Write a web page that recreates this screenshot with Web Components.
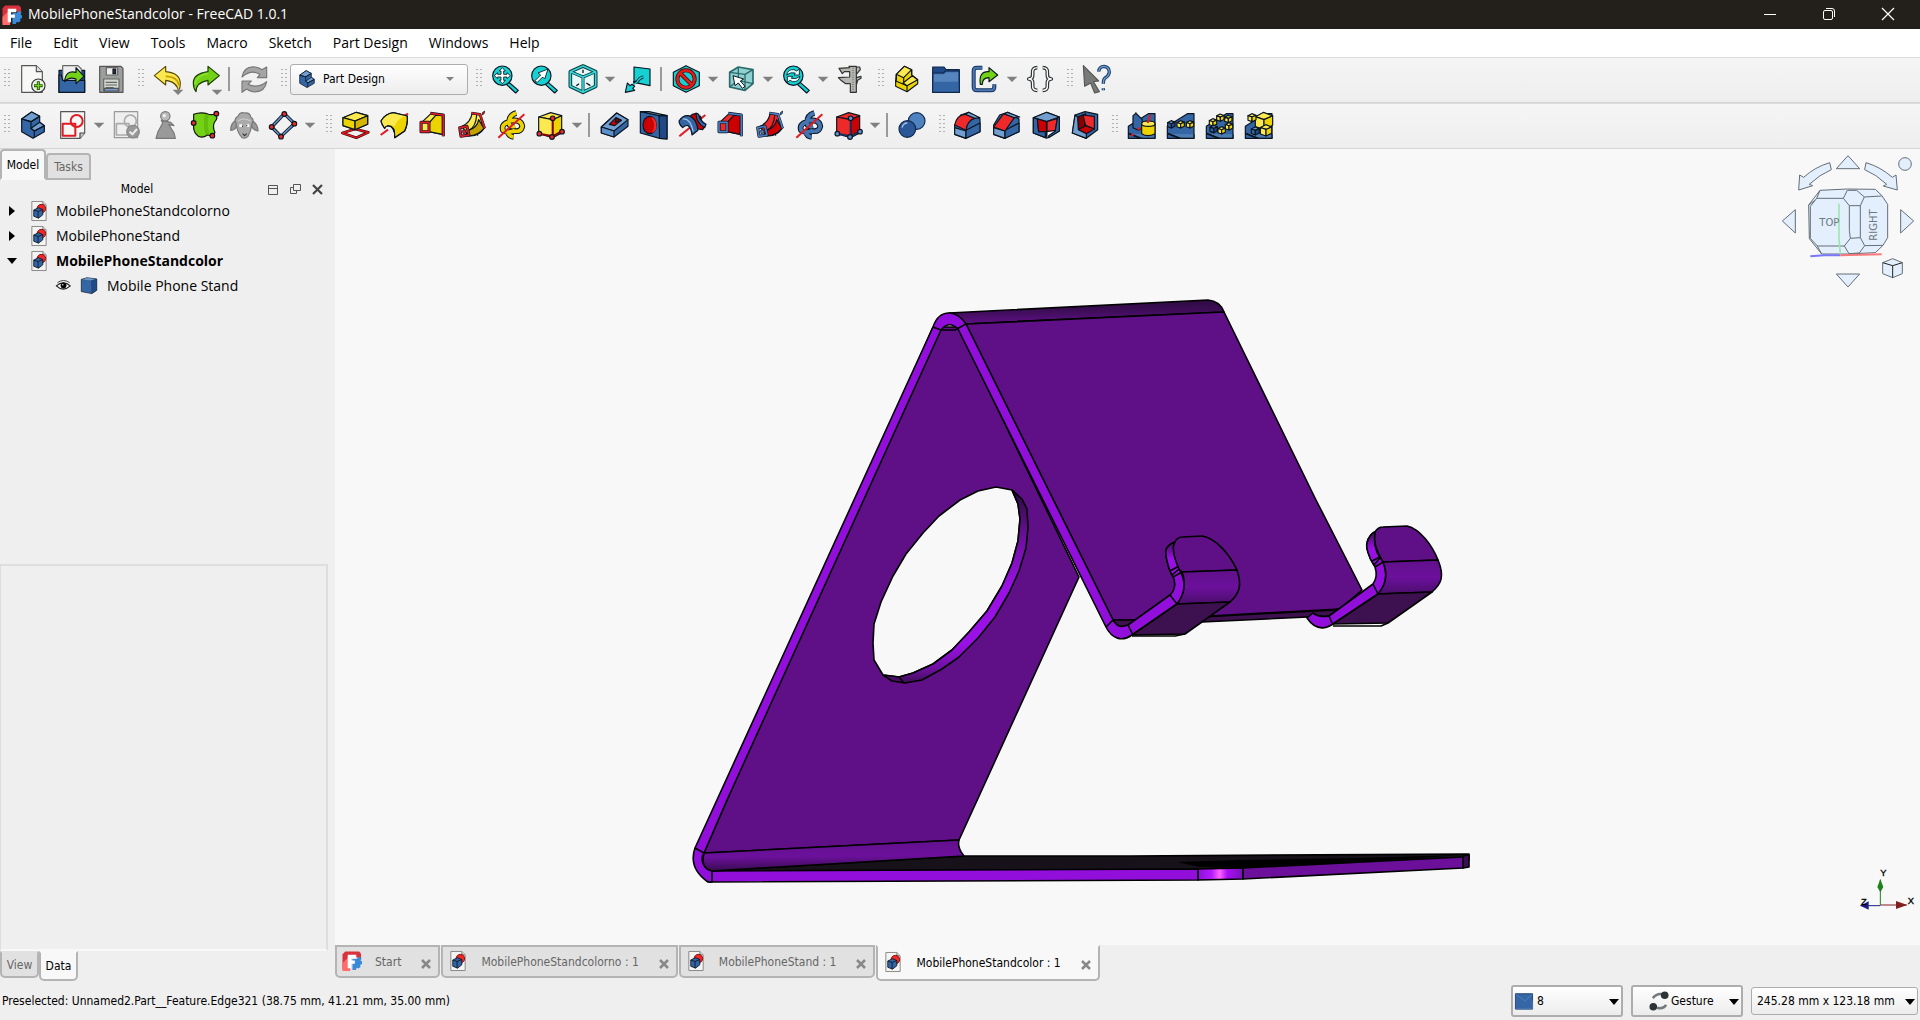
<!DOCTYPE html>
<html lang="en">
<head>
<meta charset="utf-8">
<title>MobilePhoneStandcolor - FreeCAD 1.0.1</title>
<style>
html,body{height:100%;margin:0}
body{font-family:"Open Sans","Noto Sans",sans-serif;font-size:14px;color:#000;background:#efefef;--small:"DejaVu Sans Condensed","DejaVu Sans",sans-serif}
</style>
</head>
<body>
<fc-app></fc-app>
<script>
const B='#3465a4',BL='#729fcf',BD='#204a87',Y='#fce94f',YM='#edd400',YD='#c4a000',R='#ef2929',RD='#cc0000',T='#16d0d2',TD='#06989a',G='#73d216',GD='#4e9a06';
const p=(d,f,s)=>`<path d="${d}" fill="${f||'none'}"${s?' '+s:''}/>`;
const c=(x,y,r,f,s)=>`<circle cx="${x}" cy="${y}" r="${r}" fill="${f}"${s?' '+s:''}/>`;
const box=(x,y,w,a,b,d)=>{const k=w*.22;return p(`M${x-w/2} ${y-w*.25}L${x-k*.1} ${y-w*.5}L${x+w/2} ${y-w*.3}L${x} ${y-w*.08}z`,a)+p(`M${x-w/2} ${y-w*.25}L${x} ${y-w*.08}V${y+w*.5}L${x-w/2} ${y+w*.32}z`,b)+p(`M${x+w/2} ${y-w*.3}L${x} ${y-w*.08}V${y+w*.5}L${x+w/2} ${y+w*.25}z`,d)};
const cube=(a,b,d)=>p('M8 18 44 5 77 14 50 26z',a)+p('M8 18 50 26V80L8 68z',b)+p('M77 14 50 26V80L77 66z',d);
const loft=(a,b,e)=>p('M8 34 36 8 70 12 70 70 30 62 8 62z',a)+p('M30 36 50 13 70 12 70 70 30 62z',b)+p('M34 7 73 12V76',null,'stroke-width="9"')+p('M34 7 73 12V76',null,`stroke="${e}" stroke-width="5"`)+p('M6 34H30V62H6z',null,'stroke-width="9"')+p('M6 34H30V62H6z',null,`stroke="${e}" stroke-width="5"`);
const pipe=(a,b,e)=>p('M12 46Q38 34 42 8L66 10Q70 38 80 50 62 78 30 74z',a)+p('M32 58Q54 48 56 12M60 74Q46 60 52 46',b==='none'?null:'none')+p('M32 58Q58 50 62 26L78 52Q58 76 30 74z',b)+p('M40 6 66 10 80 52',null,'stroke-width="8"')+p('M40 6 66 10 80 52',null,`stroke="${e}" stroke-width="5"`)+p('M5 50 27 46 33 72 9 76z',null,'stroke-width="9"')+p('M5 50 27 46 33 72 9 76z',null,`stroke="${e}" stroke-width="5"`)+p('M13 58l10-2 2 10-10 2z',e,'stroke-width="2"')+p('M80 0q-9 3-8 12 9-2 8-12z',e,'stroke-width="2"');
const hp='M58 6Q36 12 36 36 38 50 54 46M36 30Q72 22 76 46 72 64 52 60M36 32Q12 40 18 58 34 68 54 58M32 62Q36 76 50 78';
const helix=a=>p(hp,null,'stroke-width="17"')+p(hp,null,`stroke="${a}" stroke-width="11"`)+p('M4 80 82 10',null,'stroke="#e01b24" stroke-width="6"');
const lens=i=>p('M52 50 82 76 74 84 46 58z',T)+c(34,32,29,T)+i;
const pts=a=>c(50,22,7,a)+c(10,68,7,a)+c(48,78,7,a)+c(78,62,7,a);
const slope=p('M4 82V46L64 8H84V82z',B)+p('M4 68 40 82H84V70',BL,'fill-opacity=".4"')+p('M4 66 44 82');
const wedge=f=>p('M2 42V70L36 82 78 62V24L44 4 20 12z',B)+p('M2 50 36 60V82L2 70z',BL)+p('M36 58 78 36V62L36 82z',B)+f;
const ICONS={
new:p('M8 2H52L70 20V82H8z','#f8f8f7','stroke="#555"')+p('M52 2V20H70','#ddd','stroke="#555"')+c(58,62,20,'#eeeeec','stroke="#333"')+p('M58 49V75M45 62H71',null,'stroke="#1c5a00" stroke-width="9"')+p('M58 51V73M47 62H69',null,'stroke="#73d216" stroke-width="4"'),
open:p('M3 16H80V82H3z',BD)+p('M14 2H60L70 12V60H14z','#eee','stroke="#666"')+p('M3 30H10L14 46H80V82H3z',B)+p('M20 50Q22 14 54 22L54 8 78 34 54 56 54 42Q34 34 20 50z',G),
save:p('M8 4H72L78 10V82H8z','#9c9e9b','stroke="#555"')+p('M28 8H62V30H28z','#eee','stroke="#666"')+p('M48 12H56V26H48z','#333')+p('M20 42H66V78H20z','#d3d7cf','stroke="#666"')+p('M26 52H60M26 60H60M26 68H50',null,'stroke="#666"')+p('M22 70H64V78H22z','#729fcf','stroke="#555"'),
undo:p('M4 32 38 4V20Q80 24 82 54 82 70 76 80 74 50 38 46V60z',Y,'stroke="#5c4b00"')+p('M38 34Q74 34 78 62','none','stroke="#c4a000" stroke-width="5"'),
redo:p('M82 32 48 4V20Q4 26 4 54 4 70 12 80 12 52 48 46V60z',G,'stroke="#173d00"')+p('M48 26Q14 30 9 58','none','stroke="#8ae234" stroke-width="5"'),
refresh:p('M6 36Q12 2 46 6 58 8 66 14L80 6V38L52 38 60 28Q34 12 6 36zM80 50Q74 84 38 80 28 78 20 72L6 82V48H34L24 58Q52 72 80 50z','#a4a6a4','stroke="#777"'),
body:p('M38 3 62 16V34L76 44V62L42 82 8 62V24z',B)+p('M38 3 62 16 36 32 8 24z',BL)+p('M62 34 76 44 46 60 36 52z',BL)+p('M36 32V52L46 60V80M36 32 8 24M62 16 36 32M76 44 46 60'),
fit:lens(p('M34 8 43 18H38V28H48V23L58 32 48 41V36H38V46H43L34 56 25 46H30V36H20V41L10 32 20 23V28H30V18H25z','#fff','stroke-width="2.5"')),
fitsel:lens(p('M14 48 32 30 24 24 54 12 44 42 38 36 22 52z','#fff','stroke-width="2.5"')),
sync:lens(p('M14 30Q18 12 36 14L44 18 52 12V30H36L40 24Q26 20 14 30zM54 34Q50 52 32 50L24 46 16 52V34H32L28 40Q42 44 54 34z','#e8ffff','stroke-width="2.5"')),
iso:p('M42 3 80 20V64L42 82 4 64V20z','#e8f8f8','stroke-width="11" stroke="#0c3a3c"')+p('M4 20 42 36 80 20M42 36V82',null,'stroke-width="9" stroke="#0c3a3c"')+p('M42 3 80 20V64L42 82 4 64V20zM4 20 42 36 80 20M42 36V82',null,'stroke="#34d5d8" stroke-width="5"')+p('M22 62 30 56M52 54 64 62M42 14V24',null,'stroke-width="4"'),
nav:p('M30 6 78 12V62L30 52z',T)+p('M58 36Q46 38 40 50L28 54',null,'stroke-width="9"')+p('M58 36Q46 38 40 50L22 64',null,'stroke="#16d0d2" stroke-width="4"')+p('M4 82 10 54 18 62 24 58 32 64 26 70 32 76z',T),
draw:p('M42 2 82 22V62L42 82 4 62V22z',T)+c(42,42,26,'none','stroke="#4a0000" stroke-width="12"')+p('M24 24 60 60',null,'stroke="#4a0000" stroke-width="12"')+c(42,42,26,'none','stroke="#dd1c1c" stroke-width="8"')+p('M24 24 60 60',null,'stroke="#dd1c1c" stroke-width="8"'),
boxsel:p('M8 22 34 6 78 14V56L54 76 8 66z','#8fd0d0','stroke="#2c6a6a" stroke-width="5"')+p('M8 22 54 28 78 14M54 28V76M34 6V46L8 66M34 46 78 56',null,'stroke="#2c6a6a" stroke-width="4"')+p('M18 32 50 42 40 48 54 64 46 70 34 54 24 62z','#fff','stroke-width="3"'),
caliper:p('M36 4H58V82H40V56L26 56 12 46 4 38 38 36V20L22 20 16 26 6 10 38 8zM58 6H68L70 14 58 28zM58 38 72 34V40L62 46 58 60z','#b5b8b1','stroke="#333"')+p('M48 8V80',null,'stroke="#666" stroke-dasharray="3 4"'),
part:p('M10 28 34 4 56 14V30L74 44V56L42 80 8 64V48z',YM)+p('M10 28 34 4 56 14 32 38zM42 62 74 44 58 32 30 54z',Y)+p('M10 28V46L8 48 42 62V80M32 38V54M56 14V30',null),
folder:p('M2 6H36L42 14H82V82H2z',BD,'stroke="#10284c"')+p('M2 24H34L40 18H82V82H2z',B,'stroke="#10284c"')+p('M6 28H36L42 22H78V50H6z',BL,'stroke="none" fill-opacity=".55"'),
link:p('M34 8H18Q8 8 8 18V66Q8 76 18 76H60Q70 76 70 66V58',null,'stroke="#16305c" stroke-width="12"')+p('M34 8H18Q8 8 8 18V66Q8 76 18 76H60Q70 76 70 66V58',null,'stroke="#4a78b4" stroke-width="6"')+p('M28 58Q22 18 54 20V8L80 30 54 50V38Q34 38 34 58z',G),
braces:[11,4].map((w,i)=>p('M34 8Q18 8 20 24V30Q20 42 8 42 20 42 20 54V60Q18 76 34 76M50 8Q66 8 64 24V30Q64 42 76 42 64 42 64 54V60Q66 76 50 76',null,`stroke="${i?'#fff':'#2e3436'}" stroke-width="${w}"`)).join(''),
whats:p('M4 2 50 48 34 50 52 80 38 84 26 54 8 64z','#777a77','stroke="#555"')+p('M50 20Q52 4 66 4 82 6 82 22 80 34 68 40 64 44 64 56M64 70V76',null,'stroke="#173a68" stroke-width="10"')+p('M50 20Q52 4 66 4 82 6 82 22 80 34 68 40 64 44 64 56M64 70V76',null,'stroke="#729fcf" stroke-width="4"'),
sketch:p('M8 2H80V66L66 82H8z','#f6f6f5','stroke="#555"')+p('M80 66H66V82','#ccc','stroke="#444"')+c(56,30,18,'none','stroke="#e01b24" stroke-width="6"')+p('M14 38H52V74H14z',null,'stroke="#e01b24" stroke-width="6"'),
valid:p('M4 2H74V80H4z','#eee','stroke="#999"')+c(52,30,18,'none','stroke="#aaa" stroke-width="5"')+p('M10 38H48V72H10z',null,'stroke="#aaa" stroke-width="5"')+c(60,62,19,'#999','stroke="#888"')+p('M50 62 58 70 72 54',null,'stroke="#eee" stroke-width="6"'),
chess:p('M28 28 56 34 66 44 50 40 66 66 70 82H12L18 62 32 36z','#9a9a9a','stroke="#777"')+c(40,16,14,'#bbb','stroke="#777"')+c(37,14,5,'#eee','stroke="none"'),
green:p('M8 10Q28 2 48 8 62 14 72 8 84 20 70 34 64 50 72 64 66 78 50 72 28 86 16 70 6 60 8 40z','#73d216','stroke="#111"')+p('M48 8Q40 40 50 72',null,'stroke="#4e9a06" stroke-width="12" stroke-opacity=".4"')+c(76,8,7,R)+c(8,36,7,R)+c(64,74,7,R),
sheep:p('M18 28Q2 36 2 58 16 58 22 42M64 28Q84 38 84 60 70 58 62 42','#999','stroke="#777"')+p('M18 36Q10 24 24 16 30 2 44 6 60 4 62 18 74 26 66 38 64 58 54 76 46 84 36 80 22 66 18 36z','#aaa','stroke="#777"')+p('M28 44h8M50 44h8',null,'stroke="#fff" stroke-width="8"')+p('M36 46h3M49 44h3M38 68 44 74 50 68',null,'stroke="#333"')+p('M24 30Q40 18 62 30',null,'stroke="#ccc"'),
poly:p('M46 8 76 38 36 76 8 48z',null,'stroke="#111" stroke-width="10"')+p('M46 8 76 38 36 76 8 48z',null,'stroke="#5c8fcc" stroke-width="5"')+c(46,9,7,R)+c(76,38,7,R)+c(36,77,7,R)+c(8,48,7,R),
pad:p('M4 66 42 54 82 64 46 80z','none','stroke="#4a0000" stroke-width="8"')+p('M4 66 42 54 82 64 46 80z','none','stroke="#e01b24" stroke-width="4"')+p('M6 20 46 4 80 14V40L42 56 6 44z',YM)+p('M6 20 46 4 80 14 42 30z',Y)+p('M6 20 42 30V56L6 44z',YM)+p('M42 30 80 14V40L42 56z',YD,'fill-opacity=".6"'),
revol:p('M2 72 24 56M66 18 84 8',null,'stroke="#e01b24" stroke-width="6"')+p('M3 30Q16 8 40 5L82 15Q84 40 74 60L44 80Q46 46 24 44 16 46 14 52 6 42 3 30z',YM)+p('M3 30Q16 8 40 5L82 15Q54 18 44 46 34 40 24 44 16 46 14 52 6 42 3 30z',Y,'stroke="none"')+p('M3 30Q16 8 40 5L82 15Q84 40 74 60L44 80Q46 46 24 44 16 46 14 52 6 42 3 30z'),
loft:loft(Y,YM,'#e01b24'),pipe:pipe(Y,YD,'#e01b24'),helix:helix(YM),
acube:cube(Y,Y,YM)+p('M50 24V76L10 68M50 76 78 60',null,'stroke="#8a0000" stroke-width="6"')+pts(R),
pocket:p('M4 48 50 6 84 26V46L42 78 4 66z',B)+p('M4 48 50 6 84 26 42 60z',BL)+p('M42 60V78L4 66V48z','#5c8fcc')+p('M28 40 48 20 64 28 44 44z',RD)+p('M48 20 46 34 64 28z','#800'),
hole:p('M4 2 70 12 84 14V84L62 82 4 66z',B)+p('M60 14 84 14V84L62 82z',BD)+p('M4 2 60 14 84 14 30 2z',BL)+`<ellipse cx="32" cy="42" rx="20" ry="26" fill="${RD}"/>`+p('M36 18Q54 42 38 66 56 60 52 36 48 20 36 18z',R,'stroke="none"'),
groove:p('M4 76 82 12',null,'stroke="#e01b24" stroke-width="6"')+p('M36 16Q44 6 56 8L60 14 68 16 72 40 80 46 74 56 60 54 54 44 36 26z',RD)+p('M3 30Q14 12 32 14 56 22 60 58L42 72Q40 52 30 44 22 42 14 50 4 42 3 30z',B)+p('M14 24Q36 20 46 62',null,'stroke="#a4c6ec"')+p('M54 6Q54 36 80 50L84 40Q64 28 62 10z',B),
sloft:loft(R,RD,'#4a7cc0'),spipe:pipe(R,RD,'#4a7cc0'),shelix:helix('#4576b4'),
scube:cube(R,R,RD)+p('M50 24V76L10 68M50 76 78 60',null,'stroke="#16305c" stroke-width="6"')+pts('#5c8fcc'),
bool:c(56,30,25,'#4f82c0','stroke="#10284c"')+c(28,54,25,'#2b5797','stroke="#10284c"')+p('M12 50Q16 36 28 36',null,'stroke="#9fc2e8" stroke-width="4"'),
fillet:wedge(p('M2 42Q8 12 34 10L62 22Q40 28 36 58z',R)+p('M44 4 78 20 62 22 34 10z',BL)),
chamfer:wedge(p('M2 48 32 8 64 20 36 60z',R)+p('M44 4 80 18 64 20 34 8z',BL)),
draft:p('M4 20 44 4 82 18V60L44 82 4 66z','#fff')+p('M4 20 44 4 82 18 44 32z',BL)+p('M4 20 16 24 20 62 40 58V80L4 66z',B)+p('M16 24 44 32V62L20 62z',RD)+p('M44 32 76 22 70 58 44 62z',R)+p('M76 22 82 18V60L50 80V74L70 60z',B)+p('M44 30V80',null,'stroke-width="5"'),
thick:p('M12 12 42 2 80 10V56L46 82 4 66z',B)+p('M20 18 44 8 40 50 22 56z','#8a0000')+p('M36 12 70 16V54L44 44z',R)+p('M22 56 44 44 70 54 46 68z',RD)+p('M12 12 20 18 22 56 46 68V82L4 66z',BL),
mirror:slope+p('M18 14Q30 4 26 6L46 26V50L34 58 18 50z',B)+p('M44 38Q62 22 84 38V68Q62 80 44 68z',YM)+`<ellipse cx="64" cy="38" rx="20" ry="8" fill="${Y}"/>`+p('M62 36 70 12M12 74l8-4M32 56l8-6',null,'stroke="#e01b24" stroke-width="6"'),
linear:slope+box(16,40,22,BL,B,BD)+box(44,40,22,Y,Y,YM)+box(72,40,22,Y,Y,YM),
polar:slope+box(46,20,22,Y,Y,YM)+box(70,24,22,Y,Y,YM)+box(24,34,22,Y,Y,YM)+box(72,46,22,Y,Y,YM)+box(26,54,22,BL,B,BD)+box(50,58,22,Y,Y,YM),
multi:slope+box(60,30,52,Y,Y,YM)+box(24,20,24,Y,Y,YM)+box(34,60,24,BL,B,BD)+box(66,58,34,Y,Y,YM),
doc:p('M12 2H58L72 16V82H12z','#f4f4f2','stroke="#777"')+p('M58 2V16H72','#ccc','stroke="#777"')+c(52,32,18,R,'stroke="#700"')+p('M20 38 40 28 58 36V58L40 72 20 64z',B)+p('M20 38 38 44 58 36M38 44V72'),
solid:p('M4 12 32 4 80 10V66L56 82 4 72z',B)+p('M4 12 32 4 80 10 54 18z',BL,'stroke-width="1"')+p('M54 18 80 10V66L56 82z',BD,'stroke-width="1"'),
eye:p('M2 44Q40 10 80 44 40 80 2 44z','#fff','stroke="#222" stroke-width="7"')+c(42,42,15,'#000')+c(38,38,4,'#fff','stroke="none"')+p('M8 26Q42 2 76 26',null,'stroke="#333" stroke-width="5"'),
freecad:p('M14 2H72L80 12V34L70 28 56 26H34V80L10 84 2 76V14z','#d8323e','stroke="none"')+p('M2 50 34 20V84H2z','#ff6b6b','stroke="none"')+p('M44 34H62L66 28 74 24 82 32 78 40 84 44V56L76 58 78 66 70 74 62 70 58 80H44z','#3b8ad8','stroke="none"')+p('M24 16H60V30H38V40H54V54H38V72H24z','#fff','stroke="none"'),
gesture:p('M16 30Q34 8 56 14',null,'stroke="#777a7c" stroke-width="11"')+p('M72 58Q60 78 34 70',null,'stroke="#777a7c" stroke-width="11"')+c(66,18,16,'#2e3436','stroke="none"')+c(18,66,16,'#2e3436','stroke="none"'),
layer:p('M2 8H82V80H2z','#3566a5','stroke="#1d3a63" stroke-width="4"')+p('M4 12 46 42 80 12M80 40 82 78 4 78',null,'stroke="#5b8cc9" stroke-width="3"')
};
const def=(n,css,html)=>customElements.define(n,class extends HTMLElement{
 constructor(){super();const r=this.attachShadow({mode:'open'});const t=document.createElement('template');
 t.innerHTML=`<style>*{box-sizing:border-box}button,select{font:inherit;color:inherit;margin:0}${css}</style>`+(typeof html==='function'?html(this):html);r.append(t.content.cloneNode(true))}
});
def('fc-icon',':host{display:block;flex:none;width:28px;height:28px}svg{display:block;width:100%;height:100%;overflow:visible}',
 h=>`<svg viewBox="0 0 84 84" aria-hidden="true"><g stroke="#0b1521" stroke-width="3.5" stroke-linejoin="round">${ICONS[h.getAttribute('name')]}</g></svg>`);
def('fc-tool',`:host{display:flex;position:relative;flex:none}
 button{border:0;background:none;padding:0;display:flex;align-items:center;justify-content:center;height:32px}
 .i{width:39px}.a{width:16px}.a svg{display:block}
 .u{position:absolute;right:0;bottom:-1px;height:8px;width:16px}`,
 h=>{const m=h.getAttribute('menu'),n=h.getAttribute('label');return `<button class="i" aria-label="${n}"><fc-icon name="${h.getAttribute('icon')}"></fc-icon></button>`+(m!==null?`<button class="a${m==='under'?' u':''}" aria-label="${n} options"><svg width="12" height="7"><path d="M1 1H11" stroke="#bbb"/><path d="M1 1H11L6 6z" fill="#808080"/></svg></button>`:'')});
def('fc-grip',`:host{display:block;flex:none;width:17px;padding:0 3px 0 8px}i{display:block;height:20px;background:repeating-linear-gradient(#b0b0b0 0 1px,transparent 1px 4px);-webkit-mask:linear-gradient(90deg,#000 2px,transparent 2px 4px,#000 4px)}`,'<i></i>');
def('fc-sep',':host{display:block;flex:none;width:9px;padding:0 4px 0 3px}i{display:block;height:24px;background:#9a9a9a}','<i></i>');
def('fc-combo',`:host{display:flex;align-items:center;position:relative;border:1px solid #adadad;border-radius:3px;background:linear-gradient(#fff,#ececec);font:12px/16px var(--small)}
 select{appearance:none;border:0;background:none;outline:0;padding:0 18px 0 var(--in,8px);width:100%;height:100%}
 fc-icon{position:absolute;left:var(--ix,8px);width:var(--is,18px);height:var(--is,18px);pointer-events:none}
 svg{position:absolute;right:var(--ar,4px);top:calc(50% - 2px);pointer-events:none}`,
 h=>`${h.hasAttribute('icon')?`<fc-icon name="${h.getAttribute('icon')}"></fc-icon>`:''}<select aria-label="${h.getAttribute('label')}"><option>${h.getAttribute('value')}</option></select><svg width="10" height="6"><path d="${h.hasAttribute('arrow')?'M1 0H9L5 4z':'M0 0H10L5 6z'}" fill="${h.getAttribute('arrow')||'#000'}"/></svg>`);
def('fc-titlebar',`:host{display:flex;align-items:center;height:29px;background:#23201c;color:#fff;padding:0 3px 0 2px}
 span{margin-left:6px;flex:1;line-height:20px;padding-bottom:2px}fc-icon{width:20px;height:20px}
 button{border:0;background:none;padding:0 0 2px;width:59px;height:29px;display:grid;place-items:center}svg{display:block}`,
 `<fc-icon name="freecad"></fc-icon><span><slot></slot></span>
 <button aria-label="Minimize"><svg width="14" height="14"><path d="M1 7.5H13" stroke="#fff"/></svg></button>
 <button aria-label="Restore"><svg width="14" height="14" fill="none" stroke="#fff"><rect x="1.5" y="3.5" width="9" height="9" rx="1.5"/><path d="M4 1.5H10Q12.5 1.5 12.5 4V10"/></svg></button>
 <button aria-label="Close"><svg width="14" height="14"><path d="M1 1 13 13M13 1 1 13" stroke="#fff" stroke-width="1.2"/></svg></button>`);
def('fc-menubar',`:host{display:block;background:#fff}nav{display:flex;align-items:center;height:28px}button{border:0;background:none;padding:0 11px 0 10px;height:28px;line-height:20px}`,
 '<nav>'+['File','Edit','View','Tools','Macro','Sketch','Part Design','Windows','Help'].map(t=>`<button>${t}</button>`).join('')+'</nav>');
def('fc-toolbar',`:host{display:flex;align-items:center;height:46px;padding-bottom:2px;border-top:1px solid #dcdcdc;border-bottom:1px solid #d4d4d4;background:linear-gradient(#f5f5f5,#eee)}::slotted(:first-child){margin-left:-4px}`,'<slot></slot>');
def('fc-tab',`:host{display:block;flex:none;font:12px/16px var(--small)}
 button{display:flex;align-items:center;height:100%;width:100%;border:2px solid #b4b4b4;background:#e1e1e1;color:#666;padding:0 5px;white-space:nowrap;justify-content:center}
 :host([edge=top]) button{border-radius:4px 4px 0 0}
 :host([edge=bottom]) button{border-radius:0 0 5px 5px}
 :host([on]) button{background:#f8f8f8;color:#000}
 :host([on][edge=top]) button{border-bottom-color:#f8f8f8}
 :host([on][edge=bottom]) button{border-top-color:#f8f8f8}
 :host([edge=bottom]:not([icon])) button{border-top-color:transparent}
 fc-icon{width:20px;height:20px;margin:0 13px 2px 0}svg{margin:4px 2px 0 20px}`,
 h=>`<button role="tab">${h.hasAttribute('icon')?`<fc-icon name="${h.getAttribute('icon')}"></fc-icon>`:''}<slot></slot>${h.hasAttribute('icon')?'<svg width="10" height="10"><path d="M1 1 9 9M9 1 1 9" stroke="#888" stroke-width="2.5"/></svg>':''}</button>`);
def('fc-tree-row',`:host{display:flex;align-items:center;height:25px;line-height:20px}
 button{border:0;background:none;width:24px;height:20px;padding:0;display:grid;place-items:center;margin-right:5px}
 .d{width:20px;height:20px;margin-right:7px}.e{width:15px;height:15px;margin:0 8px 0 56px}.s{width:20px;height:17px;margin-right:8px}:host([open]){font-weight:700}`,
 h=>h.hasAttribute('child')?'<fc-icon class="e" name="eye"></fc-icon><fc-icon class="s" name="solid"></fc-icon><slot></slot>':
 `<button aria-label="Toggle"><svg width="12" height="12">${h.hasAttribute('open')?'<path d="M1 3H11L6 9z"/>':'<path d="M3 1V11L9 6z"/>'}</svg></button><fc-icon class="d" name="doc"></fc-icon><slot></slot>`);
def('fc-dock',`:host{display:flex;flex-direction:column;width:328px;flex:none}
 .t{display:flex;align-items:flex-end;height:31px}.t fc-tab{height:27px;width:45px}.t fc-tab[on]{height:31px;width:46px}
 header{display:flex;align-items:center;height:18px;font:12px/16px var(--small);padding-left:12px}header span{flex:1;text-align:center}
 header button{border:0;background:none;padding:0;width:22px;height:18px;display:grid;place-items:center}
 .tree{flex:22 1 0}.prop{flex:23 1 0;border:2px solid #dedede;border-left-width:1px;border-bottom-color:#f8f8f8}
 .b{display:flex;height:30px;align-items:flex-start}.b fc-tab{height:27px;width:39px}.b fc-tab[on]{height:30px}`,
 `<div class="t"><fc-tab edge="top" on>Model</fc-tab><fc-tab edge="top">Tasks</fc-tab></div>
 <header><span>Model</span><button aria-label="Overlay"><svg width="11" height="11" fill="none" stroke="#555"><path d="M.5 1.5h9v9h-9zM.5 4.5h9"/></svg></button><button aria-label="Float"><svg width="11" height="11" fill="none" stroke="#555"><path d="M3.5 .5h7v6h-7zM3 3.5H.5v6h6V7"/></svg></button><button aria-label="Close"><svg width="11" height="11"><path d="M1 1 10 10M10 1 1 10" stroke="#444" stroke-width="2.2"/></svg></button></header>
 <div class="tree"><fc-tree-row>MobilePhoneStandcolorno</fc-tree-row><fc-tree-row>MobilePhoneStand</fc-tree-row><fc-tree-row open>MobilePhoneStandcolor</fc-tree-row><fc-tree-row child>Mobile Phone Stand</fc-tree-row></div>
 <div class="prop"></div><div class="b"><fc-tab edge="bottom">View</fc-tab><fc-tab edge="bottom" on>Data</fc-tab></div>`);
const P='#5f1087',L='#920fdb',D='#3d1150';
def('fc-model',':host{display:block;width:100%;height:100%}svg{display:block;width:100%;height:100%}',
`<svg viewBox="335 149 1585 796" role="img" aria-label="Phone stand model"><defs>
<linearGradient id="roll" x1="0" y1="0" x2=".06" y2="1"><stop offset="0" stop-color="#2a0a3c"/><stop offset=".45" stop-color="#3c0d55"/><stop offset="1" stop-color="${P}"/></linearGradient>
<linearGradient id="fold" x1="0" y1="0" x2=".06" y2="1"><stop offset="0" stop-color="#61108a"/><stop offset=".55" stop-color="#6c109c"/><stop offset="1" stop-color="#380c50"/></linearGradient>
<linearGradient id="hook" x1="0" y1="0" x2="0" y2="1"><stop offset="0" stop-color="#60108a"/><stop offset=".5" stop-color="#6c109c"/><stop offset="1" stop-color="#4c0e6c"/></linearGradient>
<linearGradient id="rim" x1="0" y1="0" x2="0" y2="1"><stop offset="0" stop-color="#2a0a3c"/><stop offset=".25" stop-color="#6c109c"/><stop offset=".5" stop-color="#9a11e6"/><stop offset=".8" stop-color="#9a11e6"/><stop offset=".93" stop-color="#6c109c"/><stop offset="1" stop-color="#3c0d55"/></linearGradient>
<linearGradient id="lip" x1="0" y1="0" x2="0" y2="1"><stop offset="0" stop-color="#3c0d55"/><stop offset=".5" stop-color="#9a11e6"/><stop offset="1" stop-color="#920fdb"/></linearGradient>
<linearGradient id="shine"><stop offset="0" stop-color="#8f10d6"/><stop offset=".3" stop-color="#b31bff"/><stop offset=".48" stop-color="#ff63ff"/><stop offset=".65" stop-color="#a810f4"/><stop offset="1" stop-color="#7a10b4"/></linearGradient></defs>
<g stroke="#000" stroke-width="1.6" stroke-linejoin="round">
<path fill="#17111a" d="M708 871 964 856 1130 856 1469 854V860L1243 868 1198 870z"/>
<path fill="#000" d="M1177 862 1240 860 1360 858 1463 855 1360 862 1243 868 1200 867z" stroke="none"/>
<path fill="${L}" d="M709 871 1198 869V880L709 882z"/><path fill="url(#shine)" d="M1198 869 1243 868V879L1198 880z"/>
<path fill="#6c109c" d="M1243 868 1463 857V868L1243 879z"/><path fill="#3c0d55" d="M1463 856 1469 855V867L1463 868z"/>
<path fill-rule="evenodd" fill="${P}" d="M933 327 704 853 959 840 1079 577 958 327zM1012 490 996 487 978 491 960 500 939 516 923 533 906 554 893 576 881 602 874 624 873 643 874 660 883 675 899 677 913 673 933 664 952 650 969 632 987 611 1002 586 1012 563 1018 541 1020 519 1018 504z"/>
<path fill="url(#rim)" d="M1012 490 1022 499 1027 509 1028 528 1026 548 1019 571 1009 593 995 617 978 638 959 657 942 669 922 680 905 683 892 681 883 675 899 677 913 673 933 664 952 650 969 632 987 611 1002 586 1012 563 1018 541 1020 519 1018 504z"/>
<path fill="none" d="M899 677 904 683"/>
<path fill="url(#fold)" d="M704 853 959 840Q957 848 964 856L712 871Q700 868 704 853z"/>
<path fill="url(#roll)" d="M949 313 1208 300Q1220 301 1224 312L966 324z"/>
<path fill="${P}" d="M966 324 1224 312 1316 500 1362 590 1340 609 1210 616 1134 620H1113z"/>
<path fill="${D}" d="M1202 617 1335 610 1346 606 1329 616 1308 617 1202 622z"/>
<path fill="${D}" d="M1113 620H1136L1128 627H1117z"/>
<path fill="${L}" d="M933 327C936 318 942 313 949 313 957 313 962 318 966 324L1113 620C1118 628 1122 627 1128 625L1170 595C1177 588 1175 579 1172 575 1168 568 1165 554 1166 550 1168 544 1173 543 1175 542 1172 553 1177 563 1179 569 1183 576 1185 584 1184 590 1184 595 1180 601 1177 604L1132 635C1122 642 1112 639 1106 627L958 329Q949 320 941 330L727 800 704 853C699 861 705 870 712 871V882L708 882Q688 868 695 848z"/>
<path fill="url(#lip)" d="M1172 575C1168 568 1165 554 1166 550 1168 544 1173 543 1175 542 1172 553 1177 563 1179 569z"/>
<path fill="none" d="M933 327 941 330H955L966 324M1106 627 1113 620M1128 625 1133 635M1170 595 1177 604M1170 571 1179 566M1173 577 1182 572M695 848 704 853"/>
<path fill="${P}" d="M1175 542Q1177 537 1183 537L1202 536C1216 538 1230 555 1237 570L1182 572 1179 569C1172 553 1173 545 1175 542z"/>
<path fill="url(#hook)" d="M1182 572 1237 570C1242 585 1240 593 1230 602L1177 604C1186 592 1185 580 1182 572z"/>
<path fill="${D}" d="M1177 604 1230 602 1185 634 1132 635z"/><path fill="none" d="M1132 636 1175 636 1185 634"/>
<path fill="${L}" d="M1307 618 1313 613Q1320 618 1329 616L1373 584C1378 577 1376 570 1375 567 1368 557 1366 546 1367 543 1368 537 1373 532 1375 532 1374 547 1378 553 1383 562 1387 572 1387 584 1378 594L1333 624Q1318 634 1307 618z"/>
<path fill="url(#lip)" d="M1374 565C1368 557 1366 546 1367 543 1368 537 1373 532 1375 532 1374 547 1376 551 1380 558z"/>
<path fill="none" d="M1329 616 1333 625M1373 584 1378 594M1372 561 1380 557M1375 567 1383 562"/>
<path fill="${P}" d="M1375 532Q1378 527 1383 527L1407 526C1420 529 1432 545 1438 560L1383 562C1374 546 1374 541 1375 532z"/>
<path fill="url(#hook)" d="M1383 562 1438 560C1445 577 1441 584 1432 592L1378 594C1388 582 1387 572 1383 562z"/>
<path fill="${D}" d="M1378 594 1432 592 1388 623 1333 624z"/><path fill="none" d="M1333 626 1381 626 1388 623"/>
</g></svg>`);
def('fc-navcube',':host{display:block;width:137px;height:138px}svg{display:block;width:100%;height:100%}text{font:30px "DejaVu Sans",sans-serif;stroke:none;fill:#6c7882}',
`<svg viewBox="240 455 411 414" role="img" aria-label="Navigation cube"><g fill="#e3effc" stroke="#646e78" stroke-width="3" stroke-linejoin="round">
<path d="M444 466 479 505H409zM444 860 479 821H409zM247 662 286 628V698zM641 662 602 628V698z"/>
<path d="M389 487 394 508Q360 522 328 552L338 556 296 569 299 524 311 531Q345 500 389 487zM498 487 494 508Q528 522 560 552L550 557 592 569 588 524 577 531Q542 500 498 487z"/>
<circle cx="615" cy="491" r="19"/>
<path d="M360 570 442 566 526 567 545 585 563 612V712L549 735 526 757 443 761 365 761 328 715 326 614z"/>
<path fill="none" d="M360 570 350 594 331 618V714L352 737 365 761M350 594 430 594 448 616V690L451 714 433 737H352M430 594 442 570H470L493 590 481 616 448 616M481 616V712L494 736 549 735M493 590 545 587M451 714 481 712M433 737 447 760 478 758 494 736M326 614 345 600"/>
<path d="M578 775 607 787V820L578 832 548 820V787z"/><path fill="none" stroke="#222" d="M548 787 578 796 607 787M578 796V832"/></g>
<path d="M417 610V715L421 762" fill="none" stroke="#9ae8ae" stroke-width="5"/><path d="M331 768 372 765H421" fill="none" stroke="#7878fa" stroke-width="6"/><path d="M421 765 545 762" stroke="#fa7878" stroke-width="6"/>
<text x="358" y="677">TOP</text><text font-size="30" transform="translate(531 721) rotate(-90)">RIGHT</text></svg>`);
def('fc-axes',':host{display:block;width:62px;height:45px}svg{display:block;width:100%;height:100%}text{font:28px "Liberation Sans",sans-serif;stroke:#000}',
`<svg viewBox="1134 55 186 135" role="img" aria-label="Axes"><path d="M1201 166V90" stroke="#1e821e" stroke-width="3"/><path d="M1201 88 1210 112 1201 128 1192 112z" fill="#1e821e"/><path d="M1201 166H1280" stroke="#821e1e" stroke-width="3"/><path d="M1248 154 1282 166 1248 178z" fill="#821e1e"/><path d="M1141 168H1201" stroke="#1e1e82" stroke-width="3"/><path d="M1141 168 1166 155V180z" fill="#1e1e82"/><text x="1201" y="80">Y</text><text x="1283" y="162">X</text><text x="1143" y="167">Z</text></svg>`);
def('fc-view',`:host{display:flex;flex-direction:column;flex:1;min-width:0}.s{flex:1;min-height:0;background:#f8f8f8;position:relative}
 fc-navcube{position:absolute;right:3px;top:3px}fc-axes{position:absolute;right:0;bottom:32px}
 .t{display:flex;gap:1px;height:36px;align-items:flex-start}.t fc-tab{height:33px}.t fc-tab[on]{height:36px}`,
 `<div class="s"><fc-model></fc-model><fc-navcube></fc-navcube><fc-axes></fc-axes></div>
 <div class="t" role="tablist"><fc-tab edge="bottom" icon="freecad">Start</fc-tab><fc-tab edge="bottom" icon="doc">MobilePhoneStandcolorno : 1</fc-tab><fc-tab edge="bottom" icon="doc">MobilePhoneStand : 1</fc-tab><fc-tab edge="bottom" icon="doc" on>MobilePhoneStandcolor : 1</fc-tab></div>`);
def('fc-statusbar',`:host{display:flex;align-items:center;height:39px;padding:0 2px;gap:8px;font:12px/16px var(--small)}span{flex:1}
 fc-combo{height:32px;width:112px;border-width:2px}.l{--in:24px;--ix:2px;--is:18px;--ar:2px}.g{--in:38px;--ix:16px;--is:20px;--ar:2px}.m{width:167px;height:28px;--in:5px;--ar:2px;border-width:1px}`,
 `<span>Preselected: Unnamed2.Part__Feature.Edge321 (38.75 mm, 41.21 mm, 35.00 mm)</span><fc-combo class="l" icon="layer" label="Notifications" value="8"></fc-combo><fc-combo class="g" icon="gesture" label="Navigation style" value="Gesture"></fc-combo><fc-combo class="m" label="View size" value="245.28 mm x 123.18 mm"></fc-combo>`);
const t=(i,l,m)=>`<fc-tool icon="${i}" label="${l}"${m!==undefined?` menu="${m}"`:''}></fc-tool>`,g='<fc-grip></fc-grip>',s='<fc-sep></fc-sep>';
def('fc-app',`:host{display:flex;flex-direction:column;height:100vh;overflow:hidden}main{display:flex;flex:1;min-height:0;gap:7px}
 .wb{width:178px;height:31px;--in:32px;--ix:7px;--ar:12px}`,
`<fc-titlebar>MobilePhoneStandcolor - FreeCAD 1.0.1</fc-titlebar><fc-menubar></fc-menubar>
<fc-toolbar>${g}${t('new','New')}${t('open','Open')}${t('save','Save')}${g}${t('undo','Undo','under')}${t('redo','Redo','under')}${s}${t('refresh','Refresh')}${g}<fc-combo class="wb" icon="body" label="Workbench" value="Part Design" arrow="#808080"></fc-combo>${g}${t('fit','Fit all')}${t('fitsel','Fit selection')}${t('iso','Isometric','')}${t('nav','Go to linked object')}${s}${t('draw','Draw style','')}${t('boxsel','Box selection','')}${t('sync','Sync view','')}${t('caliper','Measure')}${g}${t('part','Create part')}${t('folder','Create group')}${t('link','Make link','')}${t('braces','Create variable set')}${g}${t('whats','Help')}</fc-toolbar>
<fc-toolbar>${g}${t('body','Body')}${t('sketch','Sketch','')}${t('valid','Validate sketch')}${t('chess','Check geometry')}${t('green','Sub-shape binder')}${t('sheep','Clone')}${t('poly','Datum','')}${g}${t('pad','Pad')}${t('revol','Revolution')}${t('loft','Additive loft')}${t('pipe','Additive pipe')}${t('helix','Additive helix')}${t('acube','Additive primitive','')}${s}${t('pocket','Pocket')}${t('hole','Hole')}${t('groove','Groove')}${t('sloft','Subtractive loft')}${t('spipe','Subtractive pipe')}${t('shelix','Subtractive helix')}${t('scube','Subtractive primitive','')}${s}${t('bool','Boolean')}${g}${t('fillet','Fillet')}${t('chamfer','Chamfer')}${t('draft','Draft')}${t('thick','Thickness')}${g}${t('mirror','Mirrored')}${t('linear','Linear pattern')}${t('polar','Polar pattern')}${t('multi','MultiTransform')}</fc-toolbar>
<main><fc-dock></fc-dock><fc-view></fc-view></main><fc-statusbar></fc-statusbar>`);
</script>
</body>
</html>
